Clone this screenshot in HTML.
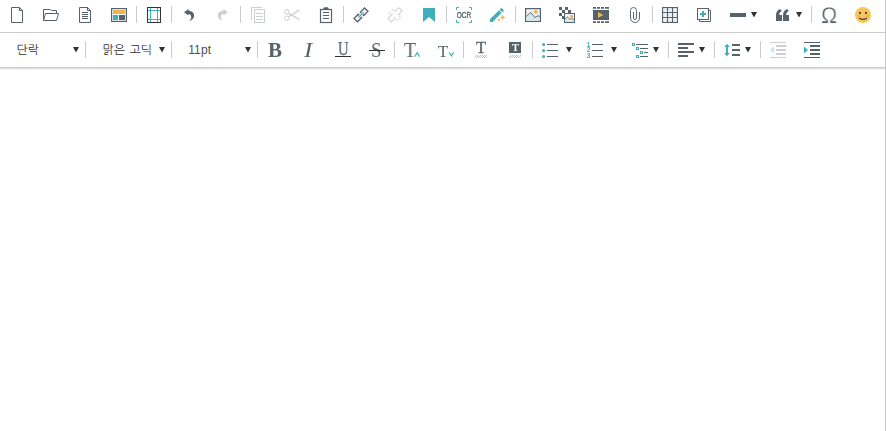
<!DOCTYPE html>
<html lang="ko">
<head>
<meta charset="utf-8">
<title>에디터</title>
<style>
html,body{margin:0;padding:0;background:#fff}
body{width:886px;height:431px;position:relative;overflow:hidden;font-family:"Liberation Sans","NanumGothic",sans-serif;color:#333}
.ed{position:absolute;left:0;top:0;width:885px;height:431px;border-right:1px solid #ccc}
.l1{position:absolute;left:0;top:32px;width:885px;height:1px;background:#ccc}
.l2{position:absolute;left:0;top:67px;width:885px;height:1px;background:#ccc;box-shadow:0 1px 0 #dfdfdf,0 2px 0 #f3f3f3}
.sep{position:absolute;width:1px;background:#cbcbcb;display:block}
.ic{position:absolute;width:16px;height:16px;overflow:visible}
.gl{will-change:transform}
.aw{position:absolute;width:6px;height:6px;overflow:visible}
.ln{position:absolute;height:1px;background:#333;display:block}
.cb{position:absolute;top:42px;height:16px;line-height:16px;font-size:12px;white-space:nowrap;color:#333}
.en{color:#505050;letter-spacing:.15px}
.g{position:absolute;font-family:"Liberation Serif",serif;color:#57636a;line-height:1;white-space:nowrap;will-change:transform}
.gb{left:268.3px;top:39.6px;font-size:21px;font-weight:bold}
.gi{left:304.2px;top:39.6px;font-size:21px;font-style:italic;transform:scaleX(1.2);transform-origin:0 0}
.gu{left:337.6px;top:39.7px;font-size:18.2px;transform:scaleX(.8);transform-origin:0 0;-webkit-text-stroke:.25px #57636a}
.gs{left:371.4px;top:39.5px;font-size:21px;transform:scaleX(.9);transform-origin:0 0}
.gt1{left:403.9px;top:39.5px;font-size:21px;transform:scaleX(.96);transform-origin:0 0}
.gt2{left:438px;top:43.6px;font-size:16.6px}
.gt3{left:476px;top:39.6px;font-size:16.6px;-webkit-text-stroke:.3px #57636a}
.gt4{left:511.8px;top:43px;font-size:10.4px;font-weight:bold;color:#fff}
.om{position:absolute;left:821px;top:4px;font-family:"Liberation Sans",sans-serif;font-size:23px;line-height:1;color:#57636a;-webkit-text-stroke:.3px #fff;transform:scale(.95,.945);transform-origin:0 86%;will-change:transform}
</style>
</head>
<body>
<div class="ed">
<div class="tb1">
<svg class="ic" style="left:9px;top:7px" viewBox="0 0 16 16"><path d="M2.5 .5H10.5L13.5 3.5V15.5H2.5Z" fill="none" stroke="#57636a"/><path d="M10.5 .5V3.5H13.5" fill="none" stroke="#57636a"/></svg>
<svg class="ic" style="left:43px;top:7px" viewBox="0 0 16 16"><path d="M.5 13.5V2.5H7.5L8.5 3.5H13.5V6.5" fill="none" stroke="#57636a"/><path d="M2.5 6.5H15.5L13.5 13.5H.5Z" fill="none" stroke="#57636a"/></svg>
<svg class="ic" style="left:77px;top:7px" viewBox="0 0 16 16"><path d="M2.5 .5H10.5L13.5 3.5V15.5H2.5Z" fill="none" stroke="#57636a"/><path d="M10.5 .5V3.5H13.5" fill="none" stroke="#57636a"/><path d="M5 5.5H11M5 7.5H11M5 9.5H11M5 11.5H11" fill="none" stroke="#57636a"/></svg>
<svg class="ic" style="left:111px;top:7px" viewBox="0 0 16 16"><rect x=".6" y="1.6" width="14.8" height="12.8" fill="#fff" stroke="#57636a" stroke-width="1.2"/><rect x="2" y="3" width="12" height="4" fill="#e9b755"/><rect x="2" y="8" width="5" height="5" fill="#3fb0bb"/><rect x="8" y="8" width="6" height="5" fill="#57636a"/></svg>
<i class="sep" style="left:136px;top:6px;height:17px"></i>
<svg class="ic" style="left:146px;top:7px" viewBox="0 0 16 16"><path d="M4.5 0V16M11.5 0V16M1 3.5H15M1 12.5H15" fill="none" stroke="#3fb0bb"/><rect x="1.5" y=".5" width="13" height="15" fill="none" stroke="#333"/></svg>
<i class="sep" style="left:171px;top:6px;height:17px"></i>
<svg class="ic" style="left:181px;top:7px" viewBox="0 0 16 16"><path d="M3 5.2L7.5 1.9V3.7C11.2 3.7 13.1 6 13.1 8.8C13.1 11.4 11.2 13.3 8.1 13.9C9.6 12.8 10.2 11.6 10.2 10.2C10.2 8.3 9.3 7.2 7.5 7.1V8.6Z" fill="#57636a"/></svg>
<svg class="ic" style="left:215px;top:7px" opacity=".3" viewBox="0 0 16 16"><path d="M3 5.2L7.5 1.9V3.7C11.2 3.7 13.1 6 13.1 8.8C13.1 11.4 11.2 13.3 8.1 13.9C9.6 12.8 10.2 11.6 10.2 10.2C10.2 8.3 9.3 7.2 7.5 7.1V8.6Z" fill="#57636a" transform="translate(16 0) scale(-1 1)"/></svg>
<i class="sep" style="left:240px;top:6px;height:17px"></i>
<svg class="ic" style="left:250px;top:7px" opacity=".3" viewBox="0 0 16 16"><path d="M1.5 13V.5H12" fill="none" stroke="#57636a"/><rect x="4.5" y="2.5" width="10" height="13" fill="none" stroke="#57636a"/><path d="M6 6.5H13M6 9.5H13M6 12.5H13" fill="none" stroke="#57636a"/></svg>
<svg class="ic" style="left:284px;top:7px" opacity=".3" viewBox="0 0 16 16"><circle cx="2.8" cy="4.8" r="2.2" fill="none" stroke="#57636a"/><circle cx="2.8" cy="11.2" r="2.2" fill="none" stroke="#57636a"/><path d="M4.6 6.2L15.4 12.7M4.6 9.8L15.2 3.1" fill="none" stroke="#57636a" stroke-width="1.25"/></svg>
<svg class="ic" style="left:318px;top:7px" viewBox="0 0 16 16"><rect x="2.5" y="2.5" width="11" height="13" fill="none" stroke="#57636a" stroke-width="1.2"/><path d="M5 2.6L6 .3H10L11 2.6Z" fill="#57636a"/><path d="M5 5.5H11M5 8.5H11M5 11.5H11" fill="none" stroke="#57636a"/></svg>
<i class="sep" style="left:343px;top:6px;height:17px"></i>
<svg class="ic" style="left:353px;top:7px" viewBox="0 0 16 16"><g transform="translate(0 -.1) rotate(-45 8 8)"><path d="M4.2 8H11.8" stroke="#3fb0bb" stroke-width="1.3"/><path d="M6.5 6.9V5.6H.6V10.4H6.5V9.1" fill="none" stroke="#57636a" stroke-width="1.35"/><path d="M6.5 6.9V5.6H.6V10.4H6.5V9.1" fill="none" stroke="#57636a" stroke-width="1.35" transform="translate(16 0) scale(-1 1)"/></g></svg>
<svg class="ic" style="left:387px;top:7px" opacity=".3" viewBox="0 0 16 16"><g transform="translate(.1 -.2) rotate(-45 8 8)"><path d="M6.6 5.65H.4V10.35H6.6M9.6 5.65H15.6V10.35H9.6" fill="none" stroke="#57636a"/></g><path d="M2.2 3.6L4.2 5.2M5.4 2.2L6.2 4.2M1.6 6.6L3.6 6.8M13.6 12.6L11.8 11M10.6 13.8L9.8 11.8M14.2 9.4L12.2 9.4" fill="none" stroke="#57636a" stroke-width=".8"/></svg>
<svg class="ic" style="left:421px;top:7px" viewBox="0 0 16 16"><path d="M2 1H14V15L8 10L2 15Z" fill="#3fb0bb"/></svg>
<i class="sep" style="left:446px;top:6px;height:17px"></i>
<svg class="ic gl" style="left:456px;top:7px" viewBox="0 0 16 16"><path d="M.5 3V.5H3M13 .5H15.5V3M15.5 13V15.5H13M3 15.5H.5V13" fill="none" stroke="#3fb0bb"/><text x="8" y="11.1" text-anchor="middle" font-family="Liberation Sans, sans-serif" font-size="8.2" textLength="14.4" lengthAdjust="spacingAndGlyphs" fill="#57636a" stroke="#57636a" stroke-width=".35">OCR</text></svg>
<svg class="ic" style="left:490px;top:7px" viewBox="0 0 16 16"><g transform="rotate(45 8 8)"><rect x="5.25" y=".5" width="3.8" height="2.5" fill="#3fb0bb"/><path d="M5.25 3.9H9.05V16.7L7.15 18.6L5.25 16.7Z" fill="#3fb0bb"/></g><path d="M12.7 7.5L13.55 9.55L15.6 10.4L13.55 11.25L12.7 13.3L11.85 11.25L9.8 10.4L11.85 9.55Z" fill="#e9b755"/><circle cx="8.9" cy="12.9" r="1.05" fill="#e9b755"/></svg>
<i class="sep" style="left:515px;top:6px;height:17px"></i>
<svg class="ic" style="left:525px;top:7px" viewBox="0 0 16 16"><rect x=".6" y="1.6" width="14.8" height="12.8" fill="#eef0f5" stroke="#57636a" stroke-width="1.2"/><path d="M1.2 9.5L5.7 5.3L9.8 10.5L13 8.6L14.8 10.2V13.8H1.2Z" fill="#d6e9e8"/><path d="M1.2 9.5L5.7 5.3L9.8 10.5L13 8.6L14.8 10.2" fill="none" stroke="#57636a" stroke-width=".9"/><circle cx="10.8" cy="4.8" r="1.9" fill="#e9b755"/></svg>
<svg class="ic" style="left:559px;top:7px" viewBox="0 0 16 16"><path d="M0 0h3v3h-3zM6 0h3v3h-3zM3 3h3v3h-3zM9 3h3v3h-3zM0 6h3v3h-3zM3 9h2.4v3h-2.4z" fill="#57636a"/><rect x="5.5" y="6.5" width="10" height="9" fill="#f1f3f7" stroke="#57636a"/><path d="M6 12L8.4 10L11 12.4L12.4 11.4L15 12.6V15H6Z" fill="#d6e9e8"/><path d="M6 12L8.4 10L11 12.4L12.4 11.4L15 12.6" fill="none" stroke="#57636a" stroke-width=".8"/><circle cx="12.6" cy="9.4" r="1.6" fill="#e9b755"/></svg>
<svg class="ic" style="left:593px;top:7px" viewBox="0 0 16 16"><path d="M0 0h3v1.8h-3zM4 0h3v1.8h-3zM8 0h3v1.8h-3zM12 0h4v1.8h-4zM0 14.2h3v1.8h-3zM4 14.2h3v1.8h-3zM8 14.2h3v1.8h-3zM12 14.2h4v1.8h-4z" fill="#57636a"/><rect x="0" y="3" width="16" height="10" fill="#57636a"/><path d="M5 5L10.4 8L5 11Z" fill="#e9b755"/></svg>
<svg class="ic" style="left:627px;top:7px" viewBox="0 0 16 16"><path d="M12.5 5V11A4.5 4.5 0 0 1 3.5 11V3.5A3 3 0 0 1 9.5 3.5V11A1.5 1.5 0 0 1 6.5 11V5" fill="none" stroke="#5d6a70"/></svg>
<i class="sep" style="left:652px;top:6px;height:17px"></i>
<svg class="ic" style="left:662px;top:7px" viewBox="0 0 16 16"><rect x=".6" y=".6" width="14.8" height="14.8" fill="#fff" stroke="#57636a" stroke-width="1.2"/><rect x="1.5" y="1.5" width="3" height="3" fill="#eceff4"/><rect x="1.5" y="6.5" width="3" height="3" fill="#eceff4"/><rect x="1.5" y="11.5" width="3" height="3" fill="#eceff4"/><rect x="6.5" y="1.5" width="3" height="3" fill="#eceff4"/><rect x="6.5" y="6.5" width="3" height="3" fill="#eceff4"/><rect x="6.5" y="11.5" width="3" height="3" fill="#eceff4"/><rect x="11.5" y="1.5" width="3" height="3" fill="#eceff4"/><rect x="11.5" y="6.5" width="3" height="3" fill="#eceff4"/><rect x="11.5" y="11.5" width="3" height="3" fill="#eceff4"/><path d="M5.5 0V16M10.5 0V16M0 5.5H16M0 10.5H16" fill="none" stroke="#57636a" stroke-width="1.2"/></svg>
<svg class="ic" style="left:696px;top:7px" viewBox="0 0 16 16"><path d="M13 3.5H14.5V14.5H3.5V13" fill="none" stroke="#57636a"/><rect x="1.5" y="1.5" width="11" height="11" fill="none" stroke="#57636a"/><path d="M4 7H10M7 4V10" stroke="#3fb0bb" stroke-width="2" fill="none"/></svg>
<svg class="ic" style="left:730px;top:7px" viewBox="0 0 16 16"><rect x="0" y="6" width="16" height="4" fill="#57636a"/></svg>
<svg class="aw" style="left:751px;top:12px" viewBox="0 0 6 6"><path d="M0 0H6L3 5.6Z" fill="#333"/></svg>
<svg class="ic" style="left:775px;top:7px" viewBox="0 0 16 16"><path d="M1 14V8.5C1 5.4 2.2 3.2 5 2L6.8 4C5 4.8 4.3 6 4.2 8H7V14Z" fill="#57636a"/><path d="M1 14V8.5C1 5.4 2.2 3.2 5 2L6.8 4C5 4.8 4.3 6 4.2 8H7V14Z" fill="#57636a" transform="translate(7 0)"/></svg>
<svg class="aw" style="left:796px;top:12px" viewBox="0 0 6 6"><path d="M0 0H6L3 5.6Z" fill="#333"/></svg>
<i class="sep" style="left:811px;top:6px;height:17px"></i>
<span class="om">Ω</span>
<svg class="ic" style="left:821px;top:7px" viewBox="0 0 16 16"><path d="M1.4 14.3H6.3V16H1.4zM9.7 14.3H14.6V16H9.7z" fill="#57636a"/></svg>
<svg class="ic" style="left:855px;top:7px" viewBox="0 0 16 16"><circle cx="8" cy="8" r="8" fill="#f7c65b"/><circle cx="5" cy="6" r="1.05" fill="#2a2f45"/><circle cx="11" cy="6" r="1.05" fill="#2a2f45"/><ellipse cx="3.6" cy="9" rx="1.5" ry="1" fill="#f0ad58"/><ellipse cx="12.4" cy="9" rx="1.5" ry="1" fill="#f0ad58"/><path d="M4.4 11.2Q8 13.6 11.6 11.2" fill="none" stroke="#3a4148" stroke-width="1.1" stroke-linecap="round"/></svg>
</div>
<div class="l1"></div>
<div class="tb2">
<span class="cb" style="left:16.4px">단락</span>
<svg class="aw" style="left:73px;top:47px" viewBox="0 0 6 6"><path d="M0 0H6L3 5.6Z" fill="#333"/></svg>
<i class="sep" style="left:85px;top:41px;height:17px"></i>
<span class="cb" style="left:102.4px;word-spacing:1.3px">맑은 고딕</span>
<svg class="aw" style="left:159px;top:47px" viewBox="0 0 6 6"><path d="M0 0H6L3 5.6Z" fill="#333"/></svg>
<i class="sep" style="left:171px;top:41px;height:17px"></i>
<span class="cb en" style="left:188.2px">11pt</span>
<svg class="aw" style="left:245px;top:47px" viewBox="0 0 6 6"><path d="M0 0H6L3 5.6Z" fill="#333"/></svg>
<i class="sep" style="left:257px;top:41px;height:17px"></i>
<span class="g gb">B</span>
<span class="g gi">I</span>
<span class="g gu">U</span><i class="ln" style="left:335px;top:56px;width:16px"></i>
<span class="g gs">S</span><i class="ln" style="left:369px;top:50px;width:16px"></i>
<i class="sep" style="left:394px;top:41px;height:17px"></i>
<span class="g gt1">T</span>
<svg class="ic" style="left:404px;top:42px" viewBox="0 0 16 16"><path d="M10.8 14.6L13.2 10.6L15.6 14.6" fill="none" stroke="#3fb0bb" stroke-width="1.2"/></svg>
<span class="g gt2">T</span>
<svg class="ic" style="left:438px;top:42px" viewBox="0 0 16 16"><path d="M11.2 10.4L13.4 13.9L15.6 10.4" fill="none" stroke="#3fb0bb" stroke-width="1.2"/></svg>
<i class="sep" style="left:463px;top:41px;height:17px"></i>
<span class="g gt3">T</span>
<svg class="ic" style="left:473px;top:42px" viewBox="0 0 16 16"><defs><pattern id="ck" width="2" height="2" patternUnits="userSpaceOnUse"><rect width="1" height="1" fill="#c4c4c4"/><rect x="1" y="1" width="1" height="1" fill="#c4c4c4"/></pattern></defs><rect x="2" y="13" width="12" height="3" fill="url(#ck)"/></svg>
<svg class="ic" style="left:507px;top:42px" viewBox="0 0 16 16"><rect x="2" y="0" width="12" height="11" fill="#57636a"/><rect x="2" y="13" width="12" height="3" fill="url(#ck)"/></svg>
<span class="g gt4">T</span>
<i class="sep" style="left:532px;top:41px;height:17px"></i>
<svg class="ic" style="left:542px;top:42px" viewBox="0 0 16 16"><circle cx="1.6" cy="2.5" r="1.55" fill="#3fb0bb"/><circle cx="1.6" cy="8.5" r="1.55" fill="#3fb0bb"/><circle cx="1.6" cy="14.5" r="1.55" fill="#3fb0bb"/><path d="M5 2.5H16M5 8.5H16M5 14.5H16" fill="none" stroke="#57636a"/></svg>
<svg class="aw" style="left:566px;top:47px" viewBox="0 0 6 6"><path d="M0 0H6L3 5.6Z" fill="#333"/></svg>
<svg class="ic gl" style="left:587px;top:42px" viewBox="0 0 16 16"><text x="-.3" y="4.9" font-family="Liberation Sans, sans-serif" font-weight="bold" font-size="6.6" fill="#3fb0bb">1</text><text x="-.3" y="10.4" font-family="Liberation Sans, sans-serif" font-weight="bold" font-size="6.6" fill="#3fb0bb">2</text><text x="-.3" y="15.9" font-family="Liberation Sans, sans-serif" font-weight="bold" font-size="6.6" fill="#3fb0bb">3</text><path d="M5 2.5H16M5 8.5H16M5 14.5H16" fill="none" stroke="#57636a"/></svg>
<svg class="aw" style="left:611px;top:47px" viewBox="0 0 6 6"><path d="M0 0H6L3 5.6Z" fill="#333"/></svg>
<svg class="ic" style="left:632px;top:42px" viewBox="0 0 16 16"><rect x="0.5" y="1.5" width="2" height="2" fill="#fff" stroke="#3fb0bb"/><rect x="4.5" y="5.5" width="2" height="2" fill="#fff" stroke="#3fb0bb"/><rect x="8.5" y="9.5" width="2" height="2" fill="#fff" stroke="#3fb0bb"/><rect x="4.5" y="13.5" width="2" height="2" fill="#fff" stroke="#3fb0bb"/><path d="M4 2.5H16M8 6.5H16M12 10.5H16M8 14.5H16" fill="none" stroke="#57636a"/></svg>
<svg class="aw" style="left:653px;top:47px" viewBox="0 0 6 6"><path d="M0 0H6L3 5.6Z" fill="#333"/></svg>
<i class="sep" style="left:668px;top:41px;height:17px"></i>
<svg class="ic" style="left:678px;top:42px" viewBox="0 0 16 16"><path d="M0 1h16v2h-16zM0 5h10v2h-10zM0 9h16v2h-16zM0 13h10v2h-10z" fill="#57636a"/></svg>
<svg class="aw" style="left:699px;top:47px" viewBox="0 0 6 6"><path d="M0 0H6L3 5.6Z" fill="#333"/></svg>
<i class="sep" style="left:714px;top:41px;height:17px"></i>
<svg class="ic" style="left:724px;top:42px" viewBox="0 0 16 16"><path d="M3 1.7L5.8 4.9H4V11.1H5.8L3 14.3L.2 11.1H2V4.9H.2Z" fill="#3fb0bb"/><path d="M8 2h8v2h-8zM8 7h8v2h-8zM8 12h8v2h-8z" fill="#57636a"/></svg>
<svg class="aw" style="left:745px;top:47px" viewBox="0 0 6 6"><path d="M0 0H6L3 5.6Z" fill="#333"/></svg>
<i class="sep" style="left:760px;top:41px;height:17px"></i>
<svg class="ic" style="left:770px;top:42px" opacity=".3" viewBox="0 0 16 16"><path d="M0 .5H16M0 15.5H16" fill="none" stroke="#57636a"/><path d="M6 3h10v2h-10zM6 7h10v2h-10zM6 11h10v2h-10z" fill="#57636a"/><path d="M4 4.4V11.6L0 8Z" fill="#3fb0bb"/></svg>
<svg class="ic" style="left:804px;top:42px" viewBox="0 0 16 16"><path d="M0 .5H16M0 15.5H16" fill="none" stroke="#57636a"/><path d="M6 3h10v2h-10zM6 7h10v2h-10zM6 11h10v2h-10z" fill="#57636a"/><path d="M0 4.4V11.6L4 8Z" fill="#3fb0bb"/></svg>
</div>
<div class="l2"></div>
</div>
</body>
</html>
